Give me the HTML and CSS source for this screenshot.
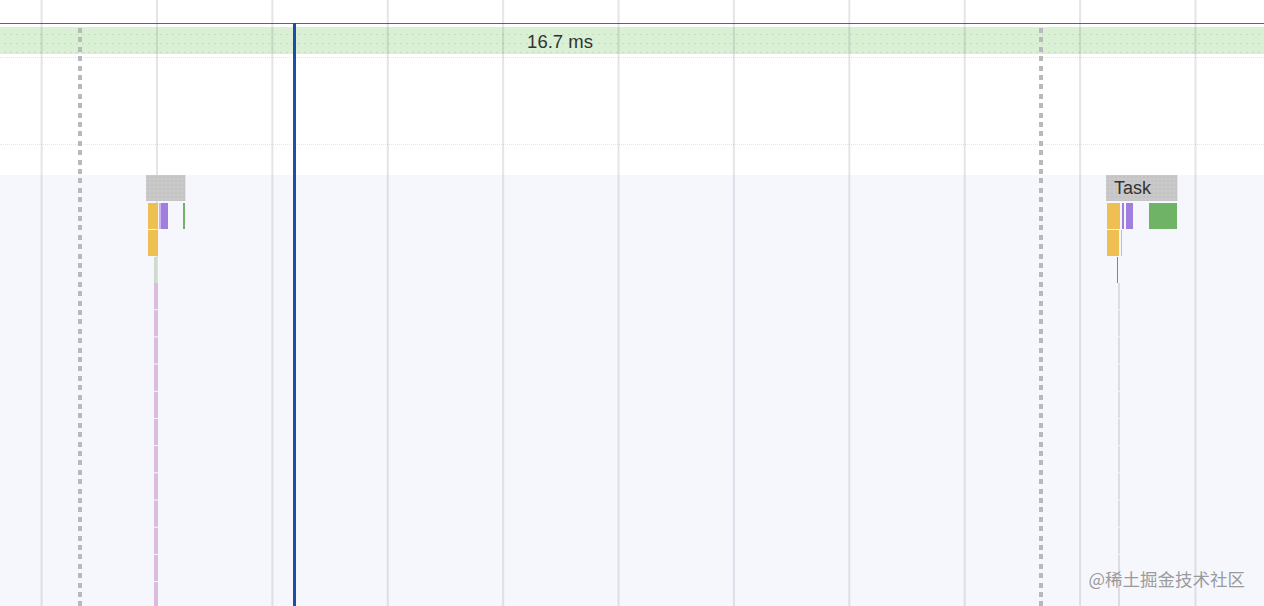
FILE: index.html
```html
<!DOCTYPE html>
<html lang="zh">
<head>
<meta charset="utf-8">
<title>Performance timeline</title>
<link rel="stylesheet" href="styles.css">
</head>
<body>
<div class="timeline">
  <div class="ruler"></div>
  <div class="frames-gap"></div>
  <div class="frames"><span class="frame-label">16.7 ms</span></div>
  <div class="track track-a"></div>
  <div class="track track-b"></div>
  <div class="main"></div>

  <div class="grid"></div>
  <div class="dash dash-left"></div>
  <div class="dash dash-right"></div>

  <div class="flame">
    <div class="blk task" style="left:146px;width:40px;top:0"></div>
    <div class="blk yellow" style="left:148px;width:10px;top:28px"></div>
    <div class="blk purple-lt" style="left:159px;width:2px;top:28px"></div>
    <div class="blk purple" style="left:161px;width:7px;top:28px"></div>
    <div class="blk green" style="left:183px;width:2px;top:28px"></div>
    <div class="blk yellow" style="left:148px;width:10px;top:55px"></div>
    <div class="blk pale" style="left:154px;width:3px;top:82px"></div>
    <div class="col pink" style="left:154px;width:4px"></div>

    <div class="blk task" style="left:1106px;width:72px;top:0"><span class="task-label">Task</span></div>
    <div class="blk yellow" style="left:1107px;width:13px;top:28px"></div>
    <div class="blk purple" style="left:1122px;width:2px;top:28px"></div>
    <div class="blk purple" style="left:1126px;width:7px;top:28px"></div>
    <div class="blk green" style="left:1149px;width:28px;top:28px"></div>
    <div class="blk yellow" style="left:1107px;width:12px;top:55px"></div>
    <div class="blk yellow" style="left:1121px;width:1px;top:55px"></div>
    <div class="blk purple-dk" style="left:1117px;width:1px;top:82px"></div>
    <div class="col grey" style="left:1118px;width:2px"></div>
  </div>

  <div class="cursor"></div>
  <div class="watermark">@稀土掘金技术社区</div>
</div>
</body>
</html>
```
FILE: styles.css
```css
html, body {
  margin: 0;
  padding: 0;
  background: #ffffff;
  overflow: hidden;
}
.timeline {
  position: relative;
  width: 1264px;
  height: 606px;
  overflow: hidden;
  font-family: "Liberation Sans", Arial, "Noto Sans CJK SC", sans-serif;
  display: flex;
  flex-direction: column;
}
.ruler {
  height: 23px;
  border-bottom: 1px solid #3f63c8;
  background: #ffffff;
  flex: none;
}
.frames-gap {
  height: 3px;
  flex: none;
}
.frames {
  height: 27px;
  flex: none;
  box-sizing: border-box;
  padding: 0 223px 0 79px;
  background-color: #d9f0d4;
  background-image: radial-gradient(circle, rgba(120,160,120,0.22) 0.6px, transparent 0.9px);
  background-size: 6px 9px;
  background-position: 2px 3px;
  display: flex;
  align-items: center;
  justify-content: center;
}
.frame-label {
  font-size: 18.5px;
  color: #333333;
  margin-top: 2px;
}
.track {
  flex: none;
  border-bottom: 1px dotted #e6e6ea;
}
.track-a {
  height: 3px;
}
.track-b {
  height: 86px;
}
.main {
  flex: 1;
  margin-top: 30px;
  background: #f6f7fd;
}
.grid {
  position: absolute;
  left: 0;
  top: 0;
  width: 100%;
  height: 100%;
  background-image: linear-gradient(to right, rgba(40,40,70,0.12) 0 1.6px, transparent 1.6px);
  background-size: 115.4px 100%;
  background-position: 40.6px 0;
  pointer-events: none;
}
.dash {
  position: absolute;
  top: 28px;
  bottom: 0;
  width: 4px;
  background-image: repeating-linear-gradient(to bottom, #b9b9bc 0 5px, transparent 5px 9.4px);
}
.dash-left { left: 78px; }
.dash-right { left: 1039px; }
.flame {
  position: absolute;
  left: 0;
  top: 175px;
  width: 100%;
  bottom: 0;
}
.blk {
  position: absolute;
  height: 26px;
  box-sizing: border-box;
}
.task {
  background-color: #c9c9ca;
  background-image: radial-gradient(circle, rgba(160,160,160,0.35) 0.5px, transparent 0.9px);
  background-size: 4px 4px;
  border-right: 1px solid #e4e4e8;
}
.task-label {
  position: absolute;
  left: 8px;
  top: 3px;
  font-size: 18px;
  color: #333333;
  line-height: 20px;
}
.yellow { background: #eebf52; }
.purple { background: #a07ee0; }
.purple-lt { background: #c8b4ee; }
.purple-dk { background: #8c72d4; }
.green { background: #6fb366; }
.pale { background: #cfdac8; }
.col {
  position: absolute;
  top: 108px;
  bottom: 0;
  background-size: 100% 27.2px;
}
.pink {
  background-image: linear-gradient(to bottom, #dcbcdc 0 26px, #f6f7fd 26px);
}
.grey {
  background-image: linear-gradient(to bottom, #dcdce2 0 26px, #f6f7fd 26px);
}
.cursor {
  position: absolute;
  left: 293px;
  top: 23px;
  bottom: 0;
  width: 3px;
  background: #1c4fa8;
}
.watermark {
  position: absolute;
  right: 19px;
  bottom: 17px;
  font-size: 17.5px;
  color: #9b9b9b;
  font-family: "Noto Sans CJK SC", "Liberation Sans", sans-serif;
  line-height: 20px;
}
```
